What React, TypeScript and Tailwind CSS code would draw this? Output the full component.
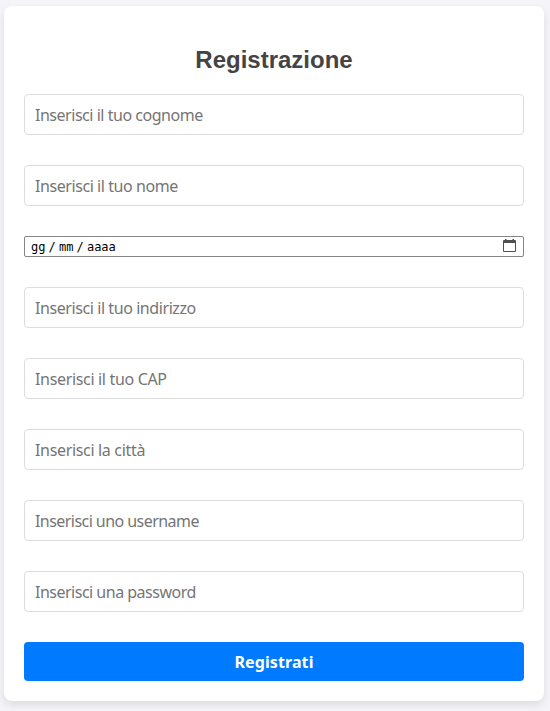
import React from "react";

const before = [
  { label: "Inserisci il tuo cognome", tracking: "tracking-[-0.47px]" },
  { label: "Inserisci il tuo nome", tracking: "tracking-[-0.43px]" },
];
const after = [
  { label: "Inserisci il tuo indirizzo", tracking: "tracking-[-0.42px]" },
  { label: "Inserisci il tuo CAP", tracking: "tracking-[-0.33px]" },
  { label: "Inserisci la città", tracking: "tracking-[-0.33px]" },
  { label: "Inserisci uno username", tracking: "tracking-[-0.55px]" },
  { label: "Inserisci una password", tracking: "tracking-[-0.5px]" },
];

function Field({ label, tracking }: { label: string; tracking: string }) {
  return (
    <input
      className={`block h-[41px] w-full rounded-[4px] border border-[#dddddd] bg-white px-[10px] font-['Noto_Sans',sans-serif] text-[16px] placeholder:text-[#757575] ${tracking}`}
      placeholder={label}
    />
  );
}

export default function App() {
  return (
    <div className="h-[711px] w-[550px] overflow-hidden bg-[#f4f4f9] pl-1 pt-[6px]">
      <form className="flex h-[695px] w-[540px] flex-col gap-[30px] rounded-lg bg-white px-5 pt-10 shadow-[0_4px_8px_rgba(0,0,0,0.1)]">
        <h2 className="-mb-[10px] h-[28px] text-center font-['Liberation_Sans',sans-serif] text-[24px] font-bold leading-[28px] text-[#444444]">
          Registrazione
        </h2>
        {before.map((f) => <Field key={f.label} {...f} />)}
        <div className="flex h-[21px] items-center justify-between rounded-[2px] border border-[#858585] bg-white pl-[6px] pr-[7px]">
          <div className="flex gap-[3px] font-['DejaVu_Sans_Mono',monospace] text-[12px] leading-[18px] text-black">
            <span>gg</span>
            <span className="w-[7.5px]">/</span>
            <span>mm</span>
            <span className="w-[7.5px]">/</span>
            <span>aaaa</span>
          </div>
          <svg width="13" height="13" viewBox="0 0 13 13" className="-mt-[2px]" fill="#505050">
            <path
              fillRule="evenodd"
              d="M2 0h1.5v1h6V0H11v1h1a1 1 0 0 1 1 1v10a1 1 0 0 1-1 1H1a1 1 0 0 1-1-1V2a1 1 0 0 1 1-1h1zM1 4v8h11V4z"
            />
          </svg>
        </div>
        {after.map((f) => <Field key={f.label} {...f} />)}
        <button type="button" className="h-[39px] rounded-[4px] bg-[#007bff] font-['Noto_Sans',sans-serif] text-[16px] font-bold tracking-[0.1px] text-white">
          Registrati
        </button>
      </form>
    </div>
  );
}
